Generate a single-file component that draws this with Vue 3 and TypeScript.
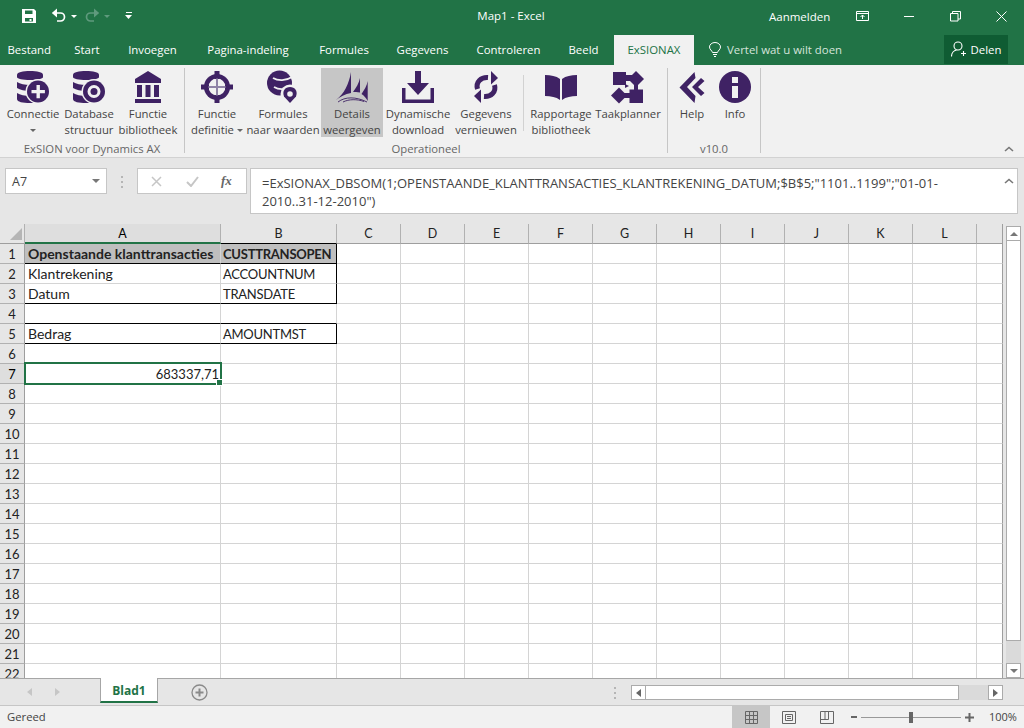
<script setup lang="ts">
type Shape = [string, string]
interface RibbonItem { l1: string; l2?: string; icon: Shape[]; caret?: boolean; inlineCaret?: boolean; active?: boolean }

const c = (x: number, y: number, r: number) => `M${x - r} ${y}a${r} ${r} 0 1 0 ${2 * r} 0a${r} ${r} 0 1 0 ${-2 * r} 0Z`
const dbBody: Shape[] = [
  ['p', 'M0 4C0 1 6 0 13 0S26 1 26 4V6C26 8 20 9 13 9S0 8 0 6Z'],
  ['p', 'M0 11C3 13 8 14 13 14S23 13 26 11V17C23 19 18 20 13 20S3 19 0 17Z'],
  ['p', 'M0 22C3 24 8 25 13 25S23 24 26 22V28C26 31 20 32 13 32S0 31 0 28Z'],
]
const icons: Record<string, Shape[]> = {
  connect: [...dbBody, ['g', c(21, 20.5, 12.5)], ['p', c(21, 20.5, 11)], ['g', 'M19.5 14h3.4v5h5v3.2h-5v5h-3.4v-5h-5v-3.2h5Z']],
  database: [...dbBody, ['g', c(21, 20.5, 12.5)], ['p', c(21, 20.5, 11)], ['g', c(21, 20.5, 6.5)], ['p', c(21, 20.5, 3.5)]],
  bank: [['p', 'M16 0L29 8V12H3V8Z'], ['p', 'M5 14h5v12H5ZM13.5 14h5v12h-5ZM22 14h5v12h-5ZM3 28h26v4H3Z']],
  target: [
    ['p', c(16, 16, 13)], ['g', c(16, 16, 8.5)],
    ['p', 'M13.5 0h5v8h-5ZM13.5 24h5v8h-5ZM0 13.5h8v5H0ZM24 13.5h8v5h-8Z'],
    ['m', 'M15 7.500h2v17h-2ZM7.500 15h17v2h-17Z'],
  ],
  globe: [
    ['p', c(12.5, 12, 12.5)], ['s', 'M6 7C11 10 19 10 25 6'], ['s', 'M7 16C12 19 18 19 25 15'],
    ['g', c(23, 23, 9.5)], ['p', 'M23 32L17 25.5C15 20 18 16 23 16S31 20 29 25.5Z'], ['g', c(23, 23, 2.8)],
  ],
  sails: [
    ['p', 'M0 29C8 23 13 13 15 1V22C9 23 4 26 0 29Z'],
    ['p', 'M17 21C20 17 23 12 24 7V21.500C21 21 19 21 17 21Z'],
    ['p', 'M25.500 23C28 19 31 15 31.700 10V30C30 27 28 24.500 25.500 23Z'],
    ['t', 'M2 31C9 25.500 20 25.500 31 31'], ['t', 'M7 31C13 28 21 28 28 30.500'],
  ],
  download: [['p', 'M0 17h3.5v11.5h25V17H32V32H0Z'], ['p', 'M13 0h6v12h8L16 24L5 12h8Z']],
  refresh: [
    ['w', 'M7.5 18C5.5 11 11 6 18 6.5'], ['p', 'M21 0L28 7L21 13.5Z'],
    ['w', 'M24.5 14C26.5 21 21 26 14 25.5'], ['p', 'M11 32L4 25L11 18.5Z'],
  ],
  book: [['p', 'M0 4C6 4 11 5 15 8V29C11 26 6 25 0 25Z'], ['p', 'M32 4C26 4 21 5 17 8V29C21 26 26 25 32 25Z']],
  flow: [
    ['p', 'M1 1h13v13H1ZM17.500 18.500h13.500V32H17.500Z'],
    ['p', 'M24 0L32 8L24 16L16 8Z'], ['p', 'M7 16.500L15 24.500L7 32.500L-1 24.500Z'],
    ['p', 'M14 4h6v6h-6ZM12 22h8v5h-8ZM22 14h4v6h-4ZM13 13l4 2-4 2Z'],
  ],
  help: [['p', 'M18.500 1L19.500 7L11 16L19.500 25L18.500 32L3.500 16.500Z'], ['p', 'M25 7L28.500 10L22 16L28.500 22L25 25L16 16Z']],
  info: [['p', c(16, 16, 16)], ['g', 'M13 6h6v6h-6ZM13 15h6v12h-6Z']],
}

const groups: { name: string; cls: string; items: (RibbonItem | null)[] }[] = [
  { name: 'ExSION voor Dynamics AX', cls: 'g1', items: [
    { l1: 'Connectie', icon: icons.connect, caret: true },
    { l1: 'Database', l2: 'structuur', icon: icons.database },
    { l1: 'Functie', l2: 'bibliotheek', icon: icons.bank },
  ] },
  { name: 'Operationeel', cls: 'g2', items: [
    { l1: 'Functie', l2: 'definitie', icon: icons.target, inlineCaret: true },
    { l1: 'Formules', l2: 'naar waarden', icon: icons.globe },
    { l1: 'Details', l2: 'weergeven', icon: icons.sails, active: true },
    { l1: 'Dynamische', l2: 'download', icon: icons.download },
    { l1: 'Gegevens', l2: 'vernieuwen', icon: icons.refresh },
    null,
    { l1: 'Rapportage', l2: 'bibliotheek', icon: icons.book },
    { l1: 'Taakplanner', icon: icons.flow },
  ] },
  { name: 'v10.0', cls: 'g3', items: [
    { l1: 'Help', icon: icons.help },
    { l1: 'Info', icon: icons.info },
  ] },
]

const tabs = ['Bestand', 'Start', 'Invoegen', 'Pagina-indeling', 'Formules', 'Gegevens', 'Controleren', 'Beeld']
const cols = ['A', 'B', 'C', 'D', 'E', 'F', 'G', 'H', 'I', 'J', 'K', 'L', '']
const rows = Array.from({ length: 22 }, (_, i) => i + 1)
const content: Record<string, string> = {
  A1: 'Openstaande klanttransacties', B1: 'CUSTTRANSOPEN',
  A2: 'Klantrekening', B2: 'ACCOUNTNUM',
  A3: 'Datum', B3: 'TRANSDATE',
  A5: 'Bedrag', B5: 'AMOUNTMST',
  A7: '683337,71',
}
const cellClass = (col: string, row: number) => {
  const id = col + row
  return {
    fill: row === 1 && (col === 'A' || col === 'B'),
    caps: col === 'B',
    blackB: (col === 'A' || col === 'B') && [1, 3, 4, 5].includes(row),
    blackR: col === 'B' && [1, 2, 3, 5].includes(row),
    selected: id === 'A7',
    num: id === 'A7',
    last: col === '',
  }
}
</script>

<template>
  <div class="app">
    <header class="title">
      <div class="qat">
        <svg class="q-save" width="16" height="16" viewBox="0 0 16 16"><path fill="#fff" fill-rule="evenodd" d="M1 1h12l2 2v12H1ZM4 2.500V6h7.500V2.500ZM4 10v3.500h8V10ZM8.500 11h2v2h-2Z" /></svg>
        <svg class="q-undo" width="16" height="16" viewBox="0 0 16 16"><path fill="none" stroke="#fff" stroke-width="1.700" d="M2 5h7.500a3.500 3.500 0 0 1 0 8H6" /><path fill="#fff" d="M6 .5V9.500L.8 5Z" /></svg>
        <span class="q-caret"></span>
        <svg class="q-redo" width="16" height="16" viewBox="0 0 16 16"><path fill="none" stroke="#5f9a7d" stroke-width="1.700" d="M14 5H6.500a3.500 3.500 0 0 0 0 8H10" /><path fill="#5f9a7d" d="M10 .5V9.500L15.200 5Z" /></svg>
        <span class="q-caret dim"></span>
        <svg class="q-more" width="8" height="8" viewBox="0 0 8 8"><path fill="#fff" d="M1 0h6v1H1ZM0 3h7L3.500 7Z" /></svg>
      </div>
      <div class="doc">Map1 - Excel</div>
      <div class="win">
        <span class="signin">Aanmelden</span>
        <svg class="w1" width="14" height="11" viewBox="0 0 14 11"><path fill="none" stroke="#fff" d="M.5.500h12v9H.5ZM.5 2.500h12M6.500 8V4M4.500 6l2-2 2 2" /></svg>
        <svg class="w2" width="11" height="11" viewBox="0 0 11 11"><path stroke="#fff" d="M0 5.500h10" /></svg>
        <svg class="w3" width="11" height="11" viewBox="0 0 11 11"><path fill="none" stroke="#fff" d="M.5 2.500h7.500v7.500H.5ZM2.500 2.500V.5H10.500V8H8" /></svg>
        <svg class="w4" width="11" height="11" viewBox="0 0 11 11"><path stroke="#fff" d="M.5.500l10 10M10.500.500l-10 10" /></svg>
      </div>
    </header>

    <nav class="tabs">
      <span v-for="t in tabs" :key="t" class="tab">{{ t }}</span>
      <span class="tab current">ExSIONAX</span>
      <span class="tell">
        <svg width="12" height="15" viewBox="0 0 12 15"><path fill="none" stroke="#fff" d="M3.500 10.500C3 8.500.5 7.500.5 5a5.500 4.500 0 0 1 11 0c0 2.500-2.500 3.500-3 5.500ZM4 12.500h4M5 14.500h2" /></svg>
        <span>Vertel wat u wilt doen</span>
      </span>
      <span class="share">
        <svg width="15" height="16" viewBox="0 0 15 16"><path fill="none" stroke="#fff" stroke-width="1.100" d="M7 1a4 4 0 0 1 0 8a4 4 0 0 1 0-8ZM.5 15.500c0-3.500 2.500-6 5-6.500M10 12.500h5M12.500 10v5" /></svg>
        <span>Delen</span>
      </span>
    </nav>

    <section class="ribbon">
      <div v-for="g in groups" :key="g.name" class="group" :class="g.cls">
        <div class="buttons">
          <template v-for="(b, i) in g.items" :key="i">
            <span v-if="!b" class="inner-sep"></span>
            <div v-else class="btn" :class="{ active: b.active }">
              <svg width="32" height="32" viewBox="0 0 32 32" class="ico">
                <path v-for="(s, j) in b.icon" :key="j" :class="s[0]" :d="s[1]" />
              </svg>
              <span class="lbl">{{ b.l1 }}</span>
              <span v-if="b.l2" class="lbl">{{ b.l2 }}<i v-if="b.inlineCaret" class="caret inline"></i></span>
              <i v-if="b.caret" class="caret alone"></i>
            </div>
          </template>
        </div>
        <div class="gname">{{ g.name }}</div>
      </div>
      <svg class="collapse" width="10" height="6" viewBox="0 0 10 6"><path fill="none" stroke="#777" stroke-width="1.600" d="M1 5l4-3.500L9 5" /></svg>
    </section>

    <section class="fbar">
      <div class="namebox"><span>A7</span><i class="nb-caret"></i></div>
      <div class="dots"><i></i><i></i><i></i></div>
      <div class="fbtns">
        <svg width="11" height="11" viewBox="0 0 11 11"><path stroke="#c6c6c6" stroke-width="1.500" d="M1 1l9 9M10 1l-9 9" /></svg>
        <svg width="13" height="11" viewBox="0 0 13 11"><path fill="none" stroke="#c6c6c6" stroke-width="2" d="M1 6l4 4 7-9" /></svg>
        <span class="fx">fx</span>
      </div>
      <div class="formula">
        <div class="ftext">=ExSIONAX_DBSOM(1;OPENSTAANDE_KLANTTRANSACTIES_KLANTREKENING_DATUM;$B$5;"1101..1199";"01-01-<br />2010..31-12-2010")</div>
        <svg class="f-up" width="10" height="6" viewBox="0 0 10 6"><path fill="none" stroke="#777" stroke-width="1.600" d="M1 5l4-3.500L9 5" /></svg>
      </div>
    </section>

    <section class="sheetwrap">
      <div class="sheet">
        <div class="corner"><i></i></div>
        <div v-for="col in cols" :key="col" class="colh" :class="{ on: col === 'A', bk: col === 'B', lastc: col === '' }">{{ col }}</div>
        <template v-for="r in rows" :key="r">
          <div class="rowh" :class="{ on: r === 7 }">{{ r }}</div>
          <div v-for="col in cols" :key="col" class="cell" :class="cellClass(col, r)">{{ content[col + r] }}</div>
        </template>
      </div>
      <div class="vscroll">
        <div class="sb-btn up"><i></i></div>
        <div class="sb-thumb"></div>
        <div class="sb-track"></div>
        <div class="sb-btn down"><i></i></div>
      </div>
    </section>

    <section class="tabbar">
      <div class="nav-arrows"><i class="al"></i><i class="ar"></i></div>
      <div class="sheet-tab">Blad1</div>
      <svg class="plus" width="17" height="17" viewBox="0 0 17 17"><circle cx="8.500" cy="8.500" r="7.500" fill="none" stroke="#8a8a8a" stroke-width="1.300" /><path stroke="#8a8a8a" stroke-width="2" d="M8.500 4.500v8M4.500 8.500h8" /></svg>
      <div class="dots small"><i></i><i></i><i></i></div>
      <div class="hscroll">
        <div class="hb"><i class="al dark"></i></div>
        <div class="hthumb"></div>
        <div class="htrack"></div>
        <div class="hb"><i class="ar dark"></i></div>
      </div>
    </section>

    <footer class="status">
      <span class="ready">Gereed</span>
      <div class="views">
        <div class="view on"><svg width="13" height="13" viewBox="0 0 13 13"><path fill="none" stroke="#666" d="M.5.500h12v12H.5ZM4.500.5v12M8.500.5v12M.5 4.500h12M.5 8.500h12" /></svg></div>
        <div class="view"><svg width="14" height="13" viewBox="0 0 14 13"><path fill="none" stroke="#666" d="M.5.500h13v12H.5ZM3.500 3.500h7v6h-7ZM5 5.500h4M5 7.500h4" /></svg></div>
        <div class="view"><svg width="14" height="13" viewBox="0 0 14 13"><path fill="none" stroke="#666" d="M.5.500h13v12H.5ZM.5 8.500h8V.5M5 .5v8" /></svg></div>
      </div>
      <div class="zoom">
        <i class="z-minus"></i>
        <div class="slider"><i></i></div>
        <svg width="9" height="9" viewBox="0 0 9 9"><path stroke="#666" stroke-width="2" d="M4.500 0v9M0 4.500h9" /></svg>
        <span class="pct">100%</span>
      </div>
    </footer>
  </div>
</template>

<style scoped>
.app { width: 1024px; height: 728px; overflow: hidden; display: flex; flex-direction: column; font-family: "Open Sans", "Noto Sans", sans-serif; font-size: 11.3px; color: #444; background: #e6e6e6; }

.title { height: 32px; flex: none; background: #217346; display: flex; align-items: center; color: #fff; }
.qat { display: flex; align-items: center; padding-left: 21px; width: 114px; flex: none; }
.q-undo { margin-left: 14px; margin-top: -1px; }
.q-caret { width: 0; height: 0; border: 3px solid transparent; border-top: 3px solid #fff; border-bottom: 0; margin-left: 4px; }
.q-caret.dim { border-top-color: #5f9a7d; }
.q-redo { margin-left: 7px; margin-top: -1px; }
.q-more { margin-left: 15px; }
.doc { flex: 1; text-align: center; font-size: 11.500px; padding-left: 118px; box-sizing: border-box; margin-top: -1px; }
.win { display: flex; align-items: center; width: 255px; flex: none; }
.signin { width: 87px; font-size: 11.500px; }
.w2 { margin-left: 34px; }
.w3 { margin-left: 35px; }
.w4 { margin-left: 35px; }

.tabs { height: 33px; flex: none; background: #217346; color: #fff; display: grid; grid-template-columns: 63px 48px 83px 108px 84px 73px 99px 56px 80px 250px 64px 16px; font-size: 11.400px; }
.tab { display: flex; align-items: center; justify-content: center; padding-top: 1px; white-space: nowrap; box-sizing: border-box; }
.tab:first-child { justify-content: flex-end; padding-right: 12px; }
.tab:nth-child(8) { padding-right: 5px; }
.tab.current { background: #f1f1f1; color: #217346; margin-top: 3px; padding: 0 0 2px; }
.tell { display: flex; align-items: center; gap: 6px; padding: 1px 0 0 15px; color: #d5e4db; }
.share { display: flex; align-items: center; justify-content: center; gap: 5px; background: #0f5c33; margin: 3px 0 1px; padding-bottom: 1px; }

.ribbon { height: 93px; flex: none; box-sizing: border-box; background: #f1f1f1; border-bottom: 1px solid #d2d2d2; display: flex; position: relative; }
.group { box-sizing: border-box; border-right: 1px solid #c6c6c6; margin-top: 3px; height: 85px; display: flex; flex-direction: column; }
.g1 { width: 185px; }
.g2 { width: 483px; }
.g3 { width: 93px; }
.buttons { display: grid; height: 69px; flex: none; }
.g1 .buttons { grid-template-columns: 66px 46px 72px; }
.g2 .buttons { grid-template-columns: 64px 68px 70px 62px 74px 1px 74px 60px; }
.g3 .buttons { grid-template-columns: 48px 38px; }
.btn { display: flex; flex-direction: column; align-items: center; padding-top: 3px; height: 69px; box-sizing: border-box; min-width: 0; }
.btn.active { background: #c6c6c6; width: 62px; justify-self: center; }
.ico { flex: none; margin-bottom: 3px; overflow: visible; }
.lbl { line-height: 16px; white-space: nowrap; }
.gname { text-align: center; line-height: 16px; color: #666; white-space: nowrap; margin-top: 4px; }
.inner-sep { background: #d2d2d2; height: 56px; margin-top: 7px; }
.caret { display: inline-block; width: 0; height: 0; border: 3px solid transparent; border-top: 3px solid #666; border-bottom: 0; }
.caret.inline { margin-left: 3px; vertical-align: 2px; }
.caret.alone { margin-top: 7px; }
.collapse { position: absolute; right: 10px; top: 81px; }
.p { fill: #3f2264; }
.g { fill: #f1f1f1; }
.m { fill: #8f83a6; }
.s { fill: none; stroke: #f1f1f1; stroke-width: 1.800; }
.t { fill: none; stroke: #3f2264; stroke-width: .9; }
.w { fill: none; stroke: #3f2264; stroke-width: 5; }

.fbar { height: 66px; flex: none; box-sizing: border-box; background: #e6e6e6; display: flex; align-items: flex-start; padding: 10px 6px 0 5px; }
.namebox { box-sizing: border-box; width: 102px; height: 26px; background: #fff; border: 1px solid #c6c6c6; display: flex; align-items: center; justify-content: space-between; padding: 0 6px; font-size: 12.500px; }
.nb-caret { width: 0; height: 0; border: 4px solid transparent; border-top: 4px solid #777; border-bottom: 0; }
.dots { width: 30px; display: flex; flex-direction: column; align-items: center; gap: 3px; padding-top: 8px; flex: none; }
.dots i { width: 2px; height: 2px; background: #b5b5b5; display: block; }
.fbtns { box-sizing: border-box; width: 110px; height: 26px; background: #fff; border: 1px solid #c6c6c6; display: flex; align-items: center; gap: 24px; padding-left: 13px; flex: none; }
.fx { font-family: "Liberation Serif", serif; font-style: italic; font-weight: 700; color: #666; font-size: 13px; margin-left: -2px; }
.formula { box-sizing: border-box; margin-left: 3px; width: 768px; height: 46px; background: #fff; border: 1px solid #c6c6c6; padding: 5px 0 0 11px; position: relative; font-size: 13px; line-height: 18px; color: #444; }
.ftext { white-space: nowrap; }
.f-up { position: absolute; right: 3px; top: 9px; }

.sheetwrap { height: 454px; flex: none; display: flex; background: #e6e6e6; overflow: hidden; }
.sheet { width: 1003px; height: 454px; overflow: hidden; flex: none; background: #fff; display: grid; grid-template-columns: 25px 196px 116px repeat(10, 64px) 26px; grid-auto-rows: 20px; font-family: Lato, "Open Sans", sans-serif; font-size: 14px; color: #222; align-content: start; }
.corner { background: #e6e6e6; border-right: 1px solid #b1b1b1; border-bottom: 1px solid #9e9e9e; box-sizing: border-box; position: relative; }
.corner i { position: absolute; right: 2px; bottom: 3px; border-left: 12px solid transparent; border-bottom: 12px solid #b5b5b5; }
.colh { box-sizing: border-box; background: #e6e6e6; border-right: 1px solid #b1b1b1; border-bottom: 1px solid #9e9e9e; text-align: center; line-height: 20px; font-size: 12.500px; color: #222; }
.colh.on { background: #dedede; border-bottom: 2px solid #217346; color: #000; }
.colh.bk { border-bottom-color: #000; }
.colh.lastc { border-right: 1px solid #9e9e9e; }
.rowh { box-sizing: border-box; background: #e6e6e6; border-right: 1px solid #9e9e9e; border-bottom: 1px solid #b1b1b1; text-align: center; line-height: 21px; font-size: 13px; color: #222; }
.rowh.on { background: #dedede; color: #000; }
.cell { box-sizing: border-box; border-right: 1px solid #d4d4d4; border-bottom: 1px solid #d4d4d4; padding: 0 3px; line-height: 20px; white-space: nowrap; min-width: 0; position: relative; }
.cell.caps { font-size: 13px; letter-spacing: -.25px; padding-left: 2px; line-height: 21px; }
.cell.last { border-right: 1px solid #9e9e9e; }
.cell.fill { background: #bfbfbf; font-weight: 700; }
.cell.blackB { border-bottom-color: #000; }
.cell.blackR { border-right-color: #000; }
.cell.num { text-align: right; font-size: 13px; padding-right: 1px; line-height: 21px; }
.cell.selected::after { content: ""; position: absolute; left: -1px; top: -2px; width: 194px; height: 19px; border: 2px solid #217346; }
.cell.selected::before { content: ""; position: absolute; right: -3px; bottom: -3px; width: 5px; height: 5px; background: #217346; border: 1px solid #fff; z-index: 2; }

.vscroll { width: 21px; display: flex; flex-direction: column; align-items: flex-start; padding-left: 3px; box-sizing: border-box; }
.sb-btn { box-sizing: border-box; width: 15px; height: 15px; background: #fff; border: 1px solid #ababab; display: flex; align-items: center; justify-content: center; flex: none; }
.sb-btn.up { margin-top: 2px; }
.sb-btn.up i { border: 4px solid transparent; border-bottom: 4px solid #777; border-top: 0; width: 0; height: 0; }
.sb-btn.down i { border: 4px solid transparent; border-top: 4px solid #777; border-bottom: 0; width: 0; height: 0; }
.sb-thumb { box-sizing: border-box; width: 15px; height: 400px; background: #fff; border: 1px solid #ababab; border-top: 0; flex: none; }
.sb-track { width: 15px; flex: 1; background: #dadada; }

.tabbar { height: 28px; flex: none; box-sizing: border-box; background: #e6e6e6; border-top: 1px solid #a6a6a6; border-bottom: 1px solid #c6c6c6; display: flex; align-items: flex-start; }
.nav-arrows { width: 100px; display: flex; gap: 23px; padding: 9px 0 0 27px; box-sizing: border-box; flex: none; }
.al { display: block; width: 0; height: 0; border: 4px solid transparent; border-right: 5px solid #c6c6c6; border-left: 0; }
.ar { display: block; width: 0; height: 0; border: 4px solid transparent; border-left: 5px solid #c6c6c6; border-right: 0; }
.al.dark { border-right-color: #666; }
.ar.dark { border-left-color: #666; }
.sheet-tab { box-sizing: border-box; width: 58px; height: 25px; margin-top: -1px; background: #fff; border-left: 1px solid #a6a6a6; border-right: 1px solid #a6a6a6; border-bottom: 2px solid #217346; color: #217346; font-weight: 700; text-align: center; font-size: 12px; line-height: 25px; flex: none; }
.plus { margin: 5px 0 0 33px; flex: none; }
.dots.small { width: 8px; margin-left: 403px; padding-top: 8px; }
.hscroll { margin-left: 12px; margin-top: 6px; display: flex; width: 372px; height: 15px; flex: none; }
.hb { box-sizing: border-box; width: 15px; height: 15px; background: #fff; border: 1px solid #ababab; display: flex; align-items: center; justify-content: center; flex: none; }
.hthumb { box-sizing: border-box; width: 313px; height: 15px; background: #fff; border: 1px solid #ababab; border-left: 0; flex: none; }
.htrack { flex: 1; background: #dadada; }

.status { height: 22px; flex: none; background: #f1f1f1; display: flex; align-items: center; color: #444; }
.ready { width: 732px; padding: 0 0 2px 7px; box-sizing: border-box; flex: none; }
.views { display: flex; height: 22px; flex: none; }
.view { width: 38px; display: flex; align-items: center; justify-content: center; }
.view.on { background: #c6c6c6; }
.zoom { display: flex; align-items: center; padding-left: 5px; }
.z-minus { width: 6px; height: 2px; background: #666; display: block; }
.slider { width: 100px; height: 1px; background: #999; margin: 0 4px 0 4px; position: relative; }
.slider i { position: absolute; left: 48px; top: -5px; width: 4px; height: 11px; background: #666; }
.pct { margin-left: 15px; font-size: 11px; padding-bottom: 2px; }
</style>

<style>
html, body { margin: 0; padding: 0; overflow: hidden; }
</style>
